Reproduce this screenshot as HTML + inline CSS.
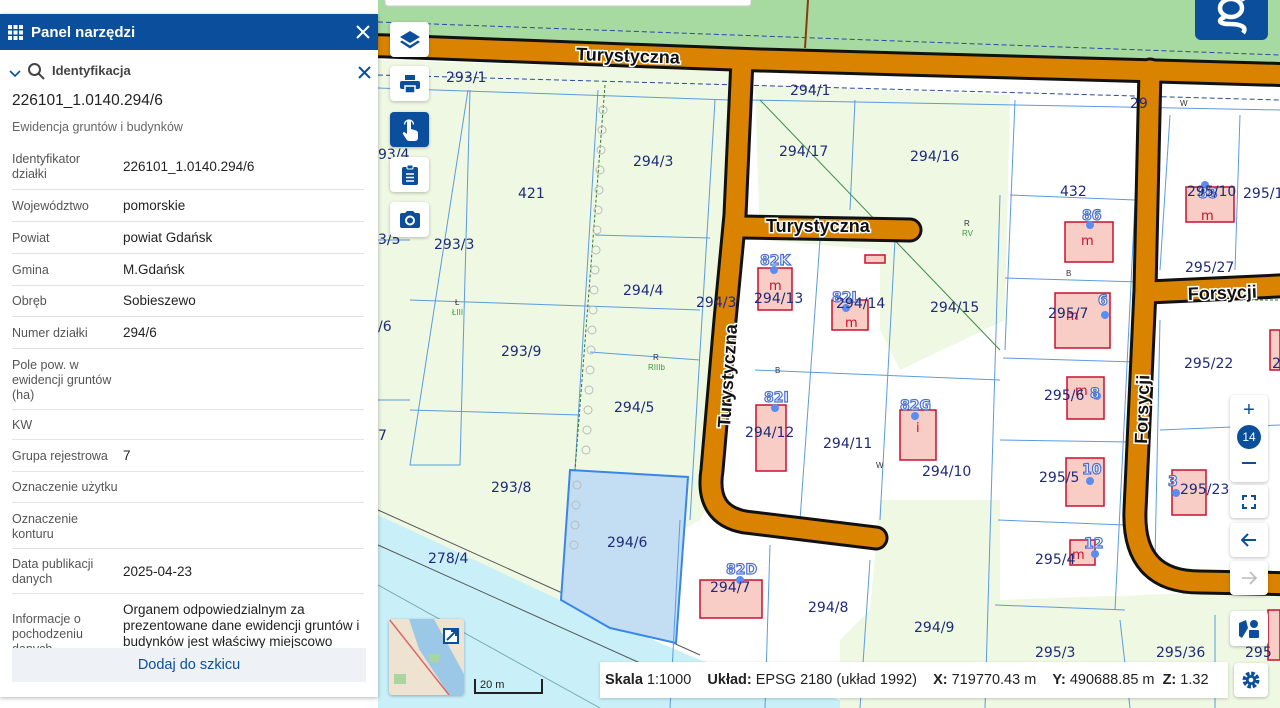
<!DOCTYPE html>
<html><head><meta charset="utf-8"><style>
*{margin:0;padding:0;box-sizing:border-box}
body{width:1280px;height:708px;overflow:hidden;position:relative;font-family:"Liberation Sans",sans-serif;background:#fff}
svg.map{position:absolute;left:0;top:0}
.lbl{font-family:"DejaVu Sans","Liberation Sans",sans-serif;font-size:14px;fill:#1f2a7a}
.panel{position:absolute;left:0;top:14px;width:378px;height:683px;background:#fff;box-shadow:0 1px 4px rgba(0,0,0,.3);overflow:hidden}
.hdr{height:36px;background:#0b4f9c;color:#fff;font-weight:bold;font-size:15px;display:flex;align-items:center;padding-left:31px;position:relative}
.row{position:absolute;left:12px;width:352px;font-size:12.5px;color:#555;border-bottom:1px solid #e3e3e3}
.row .k{position:absolute;left:0;width:106px;line-height:15px}
.row .v{position:absolute;left:111px;color:#222;font-size:13.5px;line-height:16px}
.btn{position:absolute;background:#fff;border-radius:4px;box-shadow:0 1px 3px rgba(0,0,0,.25);display:flex;align-items:center;justify-content:center}
</style></head><body>
<svg class="map" width="1280" height="708" viewBox="0 0 1280 708">
<rect width="1280" height="708" fill="#fff"/>
<polygon points="378,0 1280,0 1280,70 378,35" fill="#a6daa0"/>
<polygon points="378,60 730,70 712,500 700,520 560,600 378,520" fill="#eef8e2"/>
<polygon points="755,85 1010,95 1005,320 900,370 880,330 880,250 760,240" fill="#eef8e2"/>
<polygon points="880,500 1000,500 1000,708 840,708 840,640 870,610" fill="#eef8e2"/>
<polygon points="1000,600 1280,590 1280,708 1000,708" fill="#eef8e2"/>
<polygon points="378,515 560,600 700,660 840,700 840,708 378,708 378,575 450,610 560,640 378,560" fill="#c9f0f8"/>
<polygon points="378,545 560,630 700,675 740,708 378,708" fill="#c9f0f8"/>
<line x1="378" y1="510" x2="700" y2="655" stroke="#555" stroke-width="1"/>
<line x1="378" y1="545" x2="700" y2="690" stroke="#555" stroke-width="1"/>
<line x1="378" y1="585" x2="600" y2="708" stroke="#7ab" stroke-width="1"/>
<polygon points="570,470 688,477 676,643 610,628 561,600" fill="#c3ddf2" stroke="#3a86e8" stroke-width="2"/>
<g stroke="#5b9be0" stroke-width="1" fill="none">
<path d="M378,88 L730,100"/><path d="M750,100 L1280,110"/>
<path d="M468,90 L410,465 L460,465 L470,90"/>
<path d="M598,90 L575,470"/><path d="M715,100 L690,520"/>
<path d="M410,300 L700,310"/><path d="M595,235 L710,238"/><path d="M590,352 L700,360"/>
<path d="M410,410 L580,415"/><path d="M855,100 L850,210"/><path d="M1015,100 L1005,350"/>
<path d="M755,370 L1000,380"/><path d="M820,240 L800,520"/><path d="M895,240 L880,520"/>
<path d="M1010,195 L1135,200"/><path d="M1005,278 L1140,282"/><path d="M1003,358 L1135,362"/>
<path d="M1000,440 L1130,442"/><path d="M998,520 L1125,525"/><path d="M995,605 L1125,610"/>
<path d="M1000,195 L985,708"/><path d="M1140,100 L1115,610"/>
<path d="M1170,115 L1160,270"/><path d="M1240,115 L1235,270"/>
<path d="M1160,320 L1155,560"/><path d="M1160,430 L1280,425"/>
<path d="M680,520 L670,708"/><path d="M770,545 L765,708"/><path d="M870,560 L860,708"/>
<path d="M1120,620 L1130,708"/><path d="M1215,615 L1215,708"/>
<path d="M378,240 L410,240"/><path d="M378,400 L410,400"/>
</g>
<g stroke="#2d7a3a" stroke-width="1" fill="none" stroke-dasharray="3,2">
<path d="M605,85 L575,470"/><path d="M1150,300 L1280,300"/>
</g>
<path d="M760,100 L1000,350" stroke="#3a8a4a" stroke-width="1" fill="none"/>
<path d="M378,22 L1280,55" stroke="#2a4aa0" stroke-width="1" fill="none" stroke-dasharray="5,3"/>
<path d="M378,75 L1280,100" stroke="#2a4aa0" stroke-width="1" fill="none" stroke-dasharray="5,3"/>
<g fill="none" stroke="#bbb" stroke-width="1">
<circle cx="603" cy="110" r="4"/><circle cx="602" cy="130" r="4"/><circle cx="601" cy="150" r="4"/><circle cx="600" cy="170" r="4"/><circle cx="599" cy="190" r="4"/><circle cx="598" cy="210" r="4"/><circle cx="597" cy="230" r="4"/><circle cx="596" cy="250" r="4"/><circle cx="595" cy="270" r="4"/><circle cx="594" cy="290" r="4"/><circle cx="593" cy="310" r="4"/><circle cx="592" cy="330" r="4"/><circle cx="591" cy="350" r="4"/><circle cx="590" cy="370" r="4"/><circle cx="589" cy="390" r="4"/><circle cx="588" cy="410" r="4"/><circle cx="587" cy="430" r="4"/><circle cx="586" cy="450" r="4"/><circle cx="577" cy="485" r="4"/><circle cx="576" cy="505" r="4"/><circle cx="575" cy="525" r="4"/><circle cx="574" cy="545" r="4"/>
</g>
<line x1="808" y1="0" x2="805" y2="48" stroke="#8a3a10" stroke-width="2"/>
<g fill="none" stroke-linecap="round" stroke-linejoin="round">
<g stroke="#111" stroke-width="25">
<path d="M360,45 L760,60 L1300,75"/>
<path d="M742,60 L735,215 L725,320 L712,470 Q705,515 745,522 L876,538"/>
<path d="M742,227 L910,230"/>
<path d="M1150,70 L1145,290 L1135,510 Q1132,582 1200,582 L1300,584"/>
<path d="M1148,292 L1300,285"/>
</g>
<g stroke="#d98300" stroke-width="19">
<path d="M360,45 L760,60 L1300,75"/>
<path d="M742,60 L735,215 L725,320 L712,470 Q705,515 745,522 L876,538"/>
<path d="M742,227 L910,230"/>
<path d="M1150,70 L1145,290 L1135,510 Q1132,582 1200,582 L1300,584"/>
<path d="M1148,292 L1300,285"/>
</g>
</g>
<g font-family="Liberation Sans" font-size="18" font-weight="bold" fill="#111" stroke="#fff" stroke-width="3" paint-order="stroke">
<text x="576" y="60" transform="rotate(2 576 60)">Turystyczna</text>
<text x="766" y="232">Turystyczna</text>
<text x="1188" y="300" transform="rotate(-2 1188 300)">Forsycji</text>
<text x="730" y="428" transform="rotate(-86 730 428)">Turystyczna</text>
<text x="1147" y="444" transform="rotate(-88 1147 444)">Forsycji</text>
</g>
<g fill="#f7cdc5" stroke="#c8102e" stroke-width="1.5">
<rect x="758" y="268" width="34" height="42"/><rect x="832" y="300" width="36" height="30"/>
<rect x="756" y="405" width="30" height="66"/><rect x="900" y="410" width="36" height="50"/>
<rect x="1065" y="222" width="48" height="40"/><rect x="1055" y="293" width="55" height="55"/>
<rect x="1067" y="377" width="37" height="42"/><rect x="1066" y="458" width="38" height="48"/>
<rect x="1070" y="540" width="25" height="25"/><rect x="1186" y="187" width="48" height="35"/>
<rect x="1172" y="470" width="34" height="45"/><rect x="700" y="580" width="62" height="38"/>
<rect x="865" y="255" width="20" height="8"/><rect x="1270" y="330" width="10" height="40"/><rect x="1268" y="610" width="12" height="50"/>
</g>
<g fill="#5b8df0"><circle cx="774" cy="270" r="4"/><circle cx="846" cy="308" r="4"/><circle cx="775" cy="408" r="4"/><circle cx="915" cy="416" r="4"/><circle cx="1090" cy="225" r="4"/><circle cx="1105" cy="315" r="4"/><circle cx="1097" cy="396" r="4"/><circle cx="1090" cy="481" r="4"/><circle cx="1095" cy="554" r="4"/><circle cx="1205" cy="185" r="4"/><circle cx="1176" cy="493" r="4"/><circle cx="740" cy="580" r="4"/></g>
<g font-family="DejaVu Sans" font-size="14" fill="#fff" stroke="#4a6fd0" stroke-width="1.2" font-weight="bold">
<text x="760" y="265">82K</text><text x="832" y="302">82L</text><text x="764" y="402">82I</text><text x="900" y="410">82G</text><text x="1082" y="220">86</text><text x="1098" y="305">6</text><text x="1090" y="398">8</text><text x="1082" y="474">10</text><text x="1084" y="548">12</text><text x="1198" y="198">88</text><text x="1168" y="486">3</text><text x="726" y="574">82D</text>
</g>
<g font-family="DejaVu Sans" font-size="13" fill="#c8102e"><text x="769" y="290">m</text><text x="845" y="327">m</text><text x="1081" y="245">m</text><text x="1201" y="220">m</text><text x="1075" y="395">m</text><text x="1066" y="320">m</text><text x="1072" y="559">m</text><text x="916" y="432">i</text></g>
<g class="lbl">
<text x="446" y="82">293/1</text><text x="790" y="95">294/1</text><text x="1130" y="108">29</text>
<text x="633" y="166">294/3</text><text x="518" y="198">421</text><text x="779" y="156">294/17</text><text x="910" y="161">294/16</text>
<text x="378" y="159">93/4</text><text x="378" y="244">3/5</text><text x="378" y="331">/6</text><text x="378" y="440">7</text>
<text x="434" y="249">293/3</text><text x="1060" y="196">432</text><text x="1187" y="196">295/10</text><text x="1243" y="198">295/1</text>
<text x="623" y="295">294/4</text><text x="696" y="307">294/3</text><text x="754" y="303">294/13</text><text x="836" y="308">294/14</text><text x="930" y="312">294/15</text>
<text x="1048" y="318">295/7</text><text x="1185" y="272">295/27</text><text x="501" y="356">293/9</text>
<text x="1184" y="368">295/22</text><text x="1272" y="368">2</text>
<text x="614" y="412">294/5</text><text x="1044" y="400">295/6</text><text x="745" y="437">294/12</text><text x="823" y="448">294/11</text><text x="922" y="476">294/10</text>
<text x="1039" y="482">295/5</text><text x="1180" y="494">295/23</text><text x="491" y="492">293/8</text>
<text x="607" y="547">294/6</text><text x="428" y="563">278/4</text><text x="1035" y="564">295/4</text>
<text x="710" y="592">294/7</text><text x="808" y="612">294/8</text><text x="914" y="632">294/9</text>
<text x="1035" y="657">295/3</text><text x="1156" y="657">295/36</text><text x="1245" y="657">295</text>
</g>
<g font-family="Liberation Sans" font-size="8" fill="#3a9a3a"><text x="962" y="236">RV</text><text x="648" y="370">RIIIb</text><text x="452" y="315">ŁIII</text></g>
<g font-family="Liberation Sans" font-size="8" fill="#333"><text x="964" y="226">R</text><text x="653" y="360">R</text><text x="455" y="305">Ł</text><text x="775" y="373">B</text><text x="876" y="468">W</text><text x="1066" y="276">B</text><text x="1180" y="106">W</text></g>
<rect x="385" y="-4" width="366" height="10" rx="3" fill="#fff" stroke="#ccc"/>
</svg>

<div class="panel">
 <div class="hdr">
  <svg style="position:absolute;left:8px;top:11px" width="15" height="15" viewBox="0 0 15 15" fill="#fff"><rect x="0" y="0" width="4" height="4"/><rect x="5.5" y="0" width="4" height="4"/><rect x="11" y="0" width="4" height="4"/><rect x="0" y="5.5" width="4" height="4"/><rect x="5.5" y="5.5" width="4" height="4"/><rect x="11" y="5.5" width="4" height="4"/><rect x="0" y="11" width="4" height="4"/><rect x="5.5" y="11" width="4" height="4"/><rect x="11" y="11" width="4" height="4"/></svg>
  Panel narzędzi
  <svg style="position:absolute;right:8px;top:11px" width="14" height="14" viewBox="0 0 14 14" stroke="#fff" stroke-width="2"><path d="M1,1L13,13M13,1L1,13"/></svg>
 </div>
 <svg style="position:absolute;left:9px;top:54px" width="12" height="10" viewBox="0 0 12 10" fill="none" stroke="#0b4f9c" stroke-width="1.6"><path d="M1,3L6,8L11,3"/></svg>
 <svg style="position:absolute;left:27px;top:48px" width="19" height="19" viewBox="0 0 19 19" fill="none" stroke="#444" stroke-width="2"><circle cx="7.5" cy="7.5" r="5.5"/><path d="M11.5,11.5L17,17"/></svg>
 <div style="position:absolute;left:52px;top:49px;font-weight:bold;font-size:13px;color:#444">Identyfikacja</div>
 <svg style="position:absolute;left:358px;top:52px" width="13" height="13" viewBox="0 0 13 13" stroke="#0b4f9c" stroke-width="2"><path d="M1,1L12,12M12,1L1,12"/></svg>
 <div style="position:absolute;left:12px;top:78px;font-size:15.5px;color:#222">226101_1.0140.294/6</div>
 <div style="position:absolute;left:12px;top:106px;font-size:12.5px;color:#666">Ewidencja gruntów i budynków</div>
 <div class="row" style="top:136px;height:40px"><div class="k" style="top:2px;width:90px">Identyfikator działki</div><div class="v" style="top:9px">226101_1.0140.294/6</div></div>
 <div class="row" style="top:176px;height:32px"><div class="k" style="top:9px">Województwo</div><div class="v" style="top:8px">pomorskie</div></div>
 <div class="row" style="top:208px;height:32px"><div class="k" style="top:9px">Powiat</div><div class="v" style="top:8px">powiat Gdańsk</div></div>
 <div class="row" style="top:240px;height:32px"><div class="k" style="top:9px">Gmina</div><div class="v" style="top:8px">M.Gdańsk</div></div>
 <div class="row" style="top:272px;height:31px"><div class="k" style="top:8px">Obręb</div><div class="v" style="top:7px">Sobieszewo</div></div>
 <div class="row" style="top:303px;height:32px"><div class="k" style="top:9px">Numer działki</div><div class="v" style="top:8px">294/6</div></div>
 <div class="row" style="top:335px;height:61px"><div class="k" style="top:9px;width:104px">Pole pow. w ewidencji gruntów (ha)</div></div>
 <div class="row" style="top:396px;height:30px"><div class="k" style="top:8px">KW</div></div>
 <div class="row" style="top:426px;height:32px"><div class="k" style="top:9px">Grupa rejestrowa</div><div class="v" style="top:8px">7</div></div>
 <div class="row" style="top:458px;height:31px"><div class="k" style="top:8px;width:120px;white-space:nowrap">Oznaczenie użytku</div></div>
 <div class="row" style="top:489px;height:46px"><div class="k" style="top:9px;width:80px">Oznaczenie konturu</div></div>
 <div class="row" style="top:535px;height:45px"><div class="k" style="top:8px;width:95px">Data publikacji danych</div><div class="v" style="top:15px">2025-04-23</div></div>
 <div class="row" style="top:580px;height:70px;border:none"><div class="k" style="top:18px;width:90px">Informacje o pochodzeniu danych</div><div class="v" style="top:8px;width:245px">Organem odpowiedzialnym za prezentowane dane ewidencji gruntów i budynków jest właściwy miejscowo</div></div>
 <div style="position:absolute;left:12px;top:634px;width:354px;height:34px;background:#eef1f5;color:#0b4f9c;font-size:14.5px;text-align:center;line-height:34px">Dodaj do szkicu</div>
</div>

<div class="btn" style="left:390px;top:22px;width:39px;height:35px"><svg width="20" height="18" viewBox="0 0 20 18" fill="#0b4f9c"><path d="M10,0L20,6L10,12L0,6Z"/><path d="M2,9.5L10,14.5L18,9.5L20,11L10,17.5L0,11Z"/></svg></div>
<div class="btn" style="left:390px;top:66px;width:39px;height:35px"><svg width="20" height="18" viewBox="0 0 20 18" fill="#0b4f9c"><rect x="5" y="0" width="10" height="5"/><rect x="0" y="6" width="20" height="8" rx="2"/><rect x="5" y="11" width="10" height="7" fill="#0b4f9c" stroke="#fff" stroke-width="1.5"/></svg></div>
<div class="btn" style="left:390px;top:112px;width:39px;height:35px;background:#0b4f9c"><svg width="16" height="22" viewBox="0 0 16 22" fill="#fff"><path d="M5,3a2,2 0 0 1 4,0V10l5,1.5c1.5,.5 2,1.5 2,3V19a3,3 0 0 1-3,3H7a3,3 0 0 1-2.5-1.5L1,15c-.7-1 .5-2.5 1.8-1.6L5,15Z"/><path d="M2.5,5.5a4.5,4.5 0 0 1 9,0" fill="none" stroke="#fff" stroke-width="1.3"/></svg></div>
<div class="btn" style="left:390px;top:157px;width:39px;height:35px"><svg width="16" height="20" viewBox="0 0 16 20"><rect x="0" y="2" width="16" height="18" rx="2" fill="#0b4f9c"/><rect x="5" y="0" width="6" height="4" rx="1" fill="#0b4f9c" stroke="#fff"/><path d="M4,9H12M4,12.5H12M4,16H12" stroke="#fff" stroke-width="1.6"/></svg></div>
<div class="btn" style="left:390px;top:202px;width:39px;height:35px"><svg width="20" height="17" viewBox="0 0 20 17"><path d="M0,4a2,2 0 0 1 2-2h3l2-2h6l2,2h3a2,2 0 0 1 2,2v11a2,2 0 0 1-2,2H2a2,2 0 0 1-2-2Z" fill="#0b4f9c"/><circle cx="10" cy="9.5" r="4" fill="none" stroke="#fff" stroke-width="2"/></svg></div>

<div style="position:absolute;left:1195px;top:-8px;width:73px;height:48px;background:#0b4f9c;border-radius:6px;overflow:hidden">
<svg width="73" height="48" viewBox="0 0 73 48" fill="none" stroke="#fff" stroke-width="4.5"><ellipse cx="36" cy="16" rx="11" ry="9"/><path d="M46,8 L51,5"/><path d="M30,25 C22,28 24,32 34,32 C48,32 52,36 48,41"/></svg></div>

<div class="btn" style="left:1230px;top:395px;width:38px;height:87px;display:block">
 <div style="position:absolute;left:0;top:4px;width:38px;text-align:center;color:#0b4f9c;font-size:20px">+</div>
 <div style="position:absolute;left:7px;top:30px;width:24px;height:24px;border-radius:12px;background:#0b4f9c;color:#fff;font-size:12px;text-align:center;line-height:24px">14</div>
 <div style="position:absolute;left:12px;top:67px;width:14px;height:2px;background:#0b4f9c"></div>
</div>
<div class="btn" style="left:1230px;top:485px;width:38px;height:33px"><svg width="14" height="14" viewBox="0 0 14 14" fill="none" stroke="#0b4f9c" stroke-width="2"><path d="M1,5V1H5M9,1H13V5M13,9V13H9M5,13H1V9"/></svg></div>
<div class="btn" style="left:1230px;top:523px;width:38px;height:34px"><svg width="16" height="14" viewBox="0 0 16 14" fill="none" stroke="#0b4f9c" stroke-width="2"><path d="M15,7H2M7,1L1,7L7,13"/></svg></div>
<div class="btn" style="left:1230px;top:561px;width:38px;height:34px"><svg width="16" height="14" viewBox="0 0 16 14" fill="none" stroke="#bbb" stroke-width="1.6"><path d="M1,7H14M9,1L15,7L9,13"/></svg></div>
<div class="btn" style="left:1230px;top:611px;width:38px;height:35px"><svg width="20" height="18" viewBox="0 0 20 18" fill="#0b4f9c"><path d="M0,3L7,0L9,8L3,18L0,16Z"/><circle cx="15" cy="4" r="4"/><rect x="10" y="10" width="10" height="8" rx="1"/></svg></div>

<div style="position:absolute;left:389px;top:619px;width:75px;height:76px;border-radius:3px;overflow:hidden;box-shadow:0 1px 3px rgba(0,0,0,.3);background:#eee2d0">
<svg width="75" height="76" viewBox="0 0 75 76"><path d="M20,0 L45,0 L75,55 L75,76 L60,76 L30,30 Z" fill="#9cc8e8"/><path d="M0,0L60,76" stroke="#d66" stroke-width="1.5"/><rect x="40" y="35" width="10" height="8" fill="#a8d6a0"/><rect x="5" y="55" width="12" height="10" fill="#a8d6a0"/><rect x="55" y="10" width="14" height="14" fill="#fff" stroke="#0b4f9c" stroke-width="2"/><path d="M58,21L67,12M62,12H67V17" stroke="#0b4f9c" stroke-width="2" fill="none"/></svg></div>
<div style="position:absolute;left:474px;top:679px;width:69px;height:15px;border-left:2px solid #222;border-right:2px solid #222;border-bottom:2px solid #222;font-size:11px;padding-left:4px;line-height:13px;color:#222">20 m</div>
<div style="position:absolute;left:600px;top:662px;width:628px;height:36px;background:#fff;box-shadow:0 1px 3px rgba(0,0,0,.2);font-size:14.5px;color:#222;line-height:36px;padding-left:5px;white-space:nowrap"><b>Skala</b> 1:1000 &nbsp;&nbsp; <b>Układ:</b> EPSG 2180 (układ 1992) &nbsp;&nbsp; <b>X:</b> 719770.43 m &nbsp;&nbsp; <b>Y:</b> 490688.85 m &nbsp;<b>Z:</b> 1.32</div>
<div class="btn" style="left:1234px;top:663px;width:34px;height:34px"><svg width="18" height="18" viewBox="0 0 18 18"><circle cx="9" cy="9" r="6.5" fill="none" stroke="#0b4f9c" stroke-width="4" stroke-dasharray="3.4,1.7"/><circle cx="9" cy="9" r="5" fill="#0b4f9c"/><circle cx="9" cy="9" r="2.3" fill="#fff"/></svg></div>
</body></html>
